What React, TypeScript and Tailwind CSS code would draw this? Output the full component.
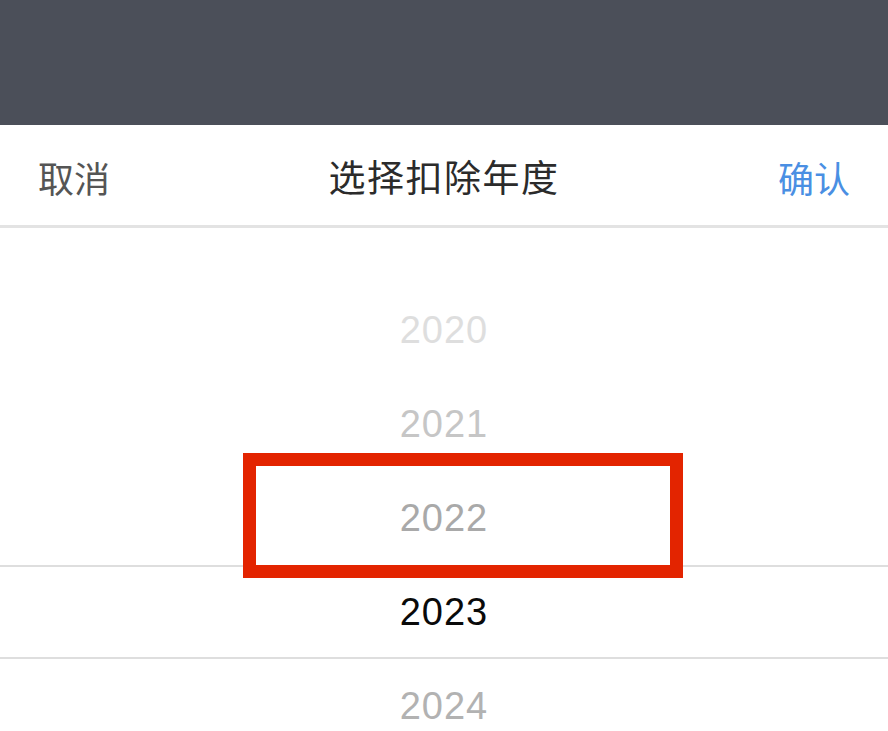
import React from "react";

const years = [
  { y: "2020", c: "text-[#dedede]" },
  { y: "2021", c: "text-[#c6c6c6]" },
  { y: "2022", c: "text-[#a9a9a9]" },
  { y: "2023", c: "text-[#0a0a0a]" },
  { y: "2024", c: "text-[#b2b2b2]" },
];

export default function App() {
  return (
    <div className="relative h-[731px] w-[888px] overflow-hidden bg-white font-['Liberation_Sans','Noto_Sans_CJK_SC',sans-serif]">
      <div className="h-[125px] bg-[#4b4f59]"></div>

      <div className="flex h-[103px] items-center justify-between border-b-[3px] border-[#e3e3e3] px-[38px] pt-[4px] font-['Noto_Sans_CJK_SC',sans-serif]">
        <button type="button" className="w-[120px] text-left text-[36px] text-[#555555]">
          取消
        </button>
        <p className="text-[37px] tracking-[1.5px] text-[#2b2b2b]">选择扣除年度</p>
        <button type="button" className="w-[120px] text-right text-[36px] text-[#4a8fe3]">
          确认
        </button>
      </div>

      <div className="pt-[55px]">
        {years.map((item) => (
          <div
            key={item.y}
            className={
              item.y === "2023"
                ? "flex h-[94px] items-center justify-center border-y-2 border-[#dedede]"
                : "flex h-[94px] items-center justify-center"
            }
          >
            <span className={"text-[38px] tracking-[1px] " + item.c}>{item.y}</span>
          </div>
        ))}
      </div>

      <div className="absolute left-[243px] top-[453px] h-[125px] w-[440px] border-[13px] border-[#e32400]"></div>
    </div>
  );
}
